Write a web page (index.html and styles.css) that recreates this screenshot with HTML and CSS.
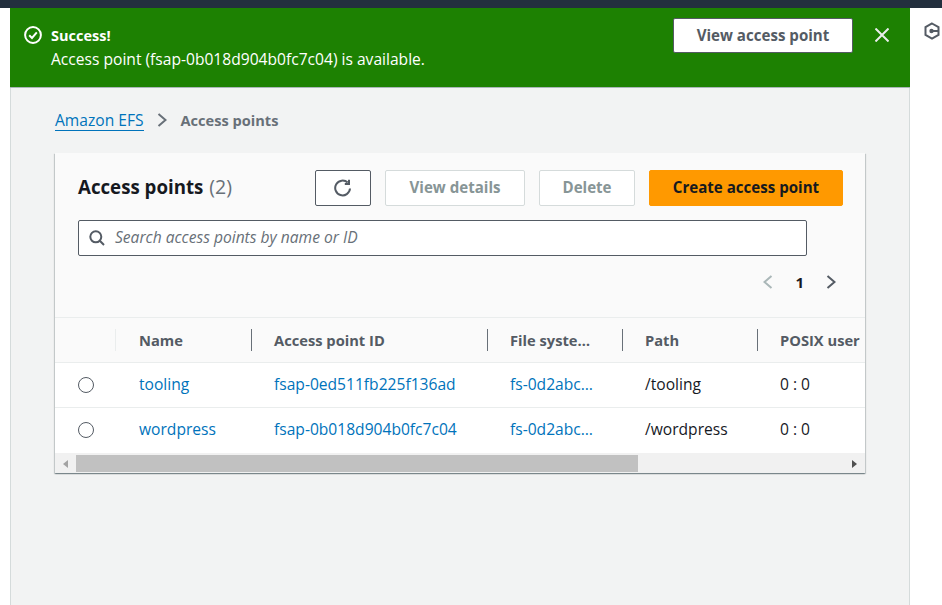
FILE: index.html
```html
<!DOCTYPE html>
<html lang="en">
<head>
    <meta charset="UTF-8">
    <title>Access points</title>
    <link rel="stylesheet" href="styles.css">
</head>
<body>
    <div class="topbar"></div>
    <div class="layout">
        <div class="main">
            <div class="flash">
                <svg class="flash-icon" width="18" height="18" viewBox="0 0 18 18"><circle cx="9" cy="9" r="7.9"/><path d="M5.2 9.2l2.8 2.8 4.8-5.6"/></svg>
                <div class="flash-text">
                    <div class="flash-title">Success!</div>
                    <div>Access point (fsap-0b018d904b0fc7c04) is available.</div>
                </div>
                <button class="btn btn-flash">View access point</button>
                <svg class="flash-close" width="14" height="14" viewBox="0 0 14 14"><path d="M0.5 0.5l13 13M13.5 0.5l-13 13"/></svg>
            </div>
            <div class="content">
                <div class="breadcrumbs">
                    <a class="crumb-link">Amazon EFS</a>
                    <svg class="crumb-sep" width="10" height="14" viewBox="0 0 10 14"><path d="M1.5 1l7 6-7 6"/></svg>
                    <span class="crumb-current">Access points</span>
                </div>
                <div class="card">
                    <div class="card-head">
                        <div class="head-row">
                            <h1 class="card-title">Access points <span class="count">(2)</span></h1>
                            <button class="btn btn-icon">
                                <svg width="18" height="18" viewBox="0 0 18 18"><path d="M16 9.5a7.4 7.4 0 1 1-2.3-5.9"/><path d="M15 0.8v4.2h-4.2"/></svg>
                            </button>
                            <button class="btn btn-off btn-details">View details</button>
                            <button class="btn btn-off btn-delete">Delete</button>
                            <button class="btn btn-primary">Create access point</button>
                        </div>
                        <div class="search">
                            <svg width="16" height="16" viewBox="0 0 16 16"><circle cx="6.8" cy="6.8" r="5.5"/><path d="M10.8 10.8l4.2 4.2"/></svg>
                            <span>Search access points by name or ID</span>
                        </div>
                        <div class="pager">
                            <svg class="pager-off" width="10" height="14" viewBox="0 0 10 14"><path d="M8.5 1l-7 6 7 6"/></svg>
                            <span class="page-num">1</span>
                            <svg class="pager-on" width="10" height="14" viewBox="0 0 10 14"><path d="M1.5 1l7 6-7 6"/></svg>
                        </div>
                    </div>
                    <table class="points">
                        <thead>
                            <tr>
                                <th class="col-radio"></th>
                                <th class="col-name first">Name</th>
                                <th class="col-id">Access point ID</th>
                                <th class="col-fs">File syste…</th>
                                <th class="col-path">Path</th>
                                <th class="col-posix">POSIX user</th>
                            </tr>
                        </thead>
                        <tbody>
                            <tr>
                                <td class="col-radio"><span class="radio"></span></td>
                                <td class="col-name"><a>tooling</a></td>
                                <td><a>fsap-0ed511fb225f136ad</a></td>
                                <td><a>fs-0d2abc…</a></td>
                                <td>/tooling</td>
                                <td>0 : 0</td>
                            </tr>
                            <tr>
                                <td class="col-radio"><span class="radio"></span></td>
                                <td class="col-name"><a>wordpress</a></td>
                                <td><a>fsap-0b018d904b0fc7c04</a></td>
                                <td><a>fs-0d2abc…</a></td>
                                <td>/wordpress</td>
                                <td>0 : 0</td>
                            </tr>
                        </tbody>
                    </table>
                    <div class="scrollbar">
                        <span class="arrow arrow-left"></span>
                        <div class="track"><div class="thumb"></div></div>
                        <span class="arrow arrow-right"></span>
                    </div>
                </div>
            </div>
        </div>
        <div class="rail">
            <svg width="18" height="18" viewBox="0 0 18 18"><path d="M9 1.5l6.5 3.7v7.6L9 16.5l-6.5-3.7V5.2z"/><circle class="rail-dot" cx="8.5" cy="9" r="2.2"/><path d="M9 9h6"/></svg>
        </div>
    </div>
</body>
</html>
```

FILE: styles.css
```css
*{
    box-sizing: border-box;
}
html, body{
    height: 100%;
}
body{
    margin: 0;
    background: #fff;
    font-family: "Open Sans", "Liberation Sans", sans-serif;
    font-size: 15.6px;
    color: #16191f;
    overflow: hidden;
}
svg{
    fill: none;
    stroke: currentColor;
    flex: none;
}
a{
    color: #0073bb;
}
.topbar{
    height: 8px;
    background: #232f3e;
}
.layout{
    display: flex;
    height: 597px;
    padding-left: 10px;
}
.main{
    width: 900px;
    background: #f2f3f3;
    border-left: 1px solid #d5dbdb;
    border-right: 1px solid #d5dbdb;
}
.rail{
    flex: 1;
    padding: 14px 0 0 13px;
    color: #545b64;
    overflow: hidden;
}
.rail svg{
    stroke-width: 2;
}
.rail-dot{
    fill: currentColor;
    stroke: none;
}
.flash{
    display: flex;
    align-items: flex-start;
    height: 80px;
    margin: 0 -1px;
    padding: 10px 21px 0 14px;
    background: #1d8102;
    color: #fff;
    border-bottom: 1px solid #aab7b8;
}
.flash-icon{
    margin-top: 8px;
    stroke-width: 2;
}
.flash-text{
    flex: 1;
    margin-left: 9px;
    padding-top: 6px;
    line-height: 25px;
}
.flash-title{
    font-size: 14.5px;
    font-weight: 700;
    line-height: 23px;
}
.flash-close{
    margin: 10px 0 0 22px;
    stroke-width: 2;
    color: #eaeded;
}
.btn{
    height: 36px;
    padding: 0;
    font: 700 15.1px "Open Sans", "Liberation Sans", sans-serif;
    border-radius: 2px;
    border: 1px solid #545b64;
    background: #fff;
    color: #545b64;
}
.btn-flash{
    width: 180px;
    height: 35px;
    padding-bottom: 2px;
}
.content{
    padding: 21px 44px 0;
}
.breadcrumbs{
    display: flex;
    align-items: center;
    height: 22px;
    margin-bottom: 22px;
}
.crumb-link{
    margin-top: 2px;
    border-bottom: 1px solid #0073bb;
    line-height: 19px;
}
.crumb-sep{
    margin: 0 14px 0 13px;
    color: #687078;
    stroke-width: 2;
}
.crumb-current{
    font-size: 14.6px;
    font-weight: 700;
    color: #687078;
}
.card{
    width: 810px;
    background: #fff;
    box-shadow: 0 1px 1px 0 rgba(0,28,36,.3), 1px 1px 1px 0 rgba(0,28,36,.15), -1px 1px 1px 0 rgba(0,28,36,.15);
}
.card-head{
    height: 165px;
    padding: 17px 22px 0 23px;
    background: #fafafa;
    border-bottom: 1px solid #eaeded;
}
.head-row{
    display: flex;
    align-items: center;
}
.card-title{
    flex: 1;
    margin: 0;
    padding-bottom: 4px;
    font-size: 18.7px;
    font-weight: 700;
}
.count{
    margin-left: 1px;
    font-size: 19.5px;
    font-weight: 400;
    color: #687078;
}
.btn-icon{
    display: flex;
    align-items: center;
    justify-content: center;
    width: 56px;
    color: #545b64;
}
.btn-icon svg{
    stroke-width: 2;
}
.btn-off{
    padding-bottom: 2px;
    background: #fff;
    color: #879596;
    border-color: #d5dbdb;
}
.btn-details{
    width: 140px;
    margin-left: 14px;
}
.btn-delete{
    width: 96px;
    margin-left: 14px;
}
.btn-primary{
    width: 194px;
    margin-left: 14px;
    padding-bottom: 2px;
    background: #ff9900;
    border-color: #ff9900;
    color: #16191f;
}
.search{
    display: flex;
    align-items: center;
    width: 729px;
    height: 36px;
    margin-top: 14px;
    padding-left: 10px;
    padding-bottom: 2px;
    background: #fff;
    border: 1px solid #545b64;
    border-radius: 2px;
    color: #687078;
    font-style: italic;
}
.search svg{
    margin: 2px 10px 0 0;
    stroke-width: 2;
    color: #545b64;
}
.pager{
    display: flex;
    align-items: center;
    justify-content: flex-end;
    margin-top: 16px;
    padding-right: 7px;
}
.pager svg{
    stroke-width: 2;
}
.pager-off{
    color: #aab7b8;
}
.pager-on{
    color: #545b64;
}
.page-num{
    margin: 0 22px;
    font-size: 15px;
    font-weight: 700;
}
.points{
    width: 810px;
    table-layout: fixed;
    border-collapse: collapse;
}
.points th{
    position: relative;
    height: 44px;
    padding: 0 0 0 23px;
    text-align: left;
    font-size: 14.7px;
    font-weight: 700;
    color: #545b64;
    background: #fafafa;
    border-bottom: 1px solid #eaeded;
    white-space: nowrap;
}
.points th:not(.col-radio)::before{
    content: "";
    position: absolute;
    left: 0;
    top: 11px;
    height: 22px;
    border-left: 1px solid #687078;
}
.points th.first::before{
    border-color: #eaeded;
}
.points td{
    height: 45px;
    padding: 0 0 2px 23px;
    background: #fff;
    border-bottom: 1px solid #eaeded;
    white-space: nowrap;
}
.points tbody tr:last-child td{
    height: 46px;
    border-bottom: 0;
}
.points td.col-radio{
    padding-bottom: 0;
}
.points .col-name{
    padding-left: 24px;
}
.col-radio{
    width: 60px;
}
.col-name{
    width: 136px;
}
.col-id{
    width: 236px;
}
.col-fs{
    width: 135px;
}
.col-path{
    width: 135px;
}
.col-posix{
    width: 108px;
}
.radio{
    display: block;
    width: 16px;
    height: 16px;
    border: 1px solid #545b64;
    border-radius: 50%;
    background: #fff;
}
.scrollbar{
    display: flex;
    align-items: center;
    height: 20px;
    padding-top: 1px;
    background: #f1f1f1;
}
.arrow{
    width: 0;
    height: 0;
    border-top: 4px solid transparent;
    border-bottom: 4px solid transparent;
}
.arrow-left{
    margin: 0 8px 0 8px;
    border-right: 5px solid #a3a3a3;
}
.arrow-right{
    margin: 0 8px 0 8px;
    border-left: 5px solid #505050;
}
.track{
    flex: 1;
    height: 17px;
}
.thumb{
    width: 562px;
    height: 17px;
    background: #c1c1c1;
}
```
